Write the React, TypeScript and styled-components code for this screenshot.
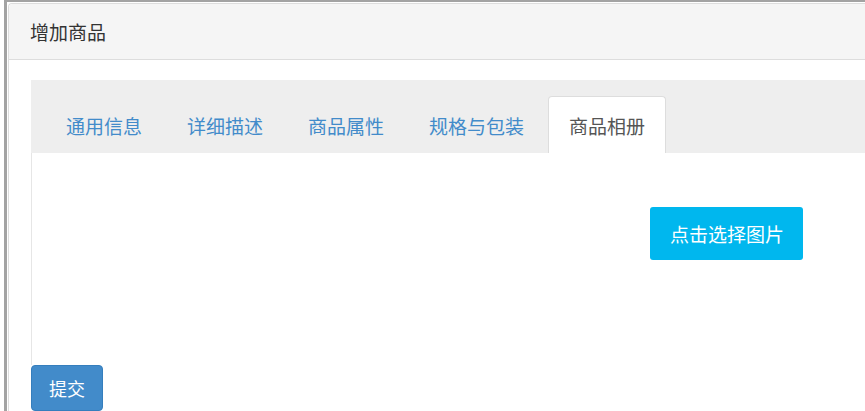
import React, { useState } from "react";
import styled, { createGlobalStyle } from "styled-components";

const Global = createGlobalStyle`
  html, body { margin: 0; padding: 0; background: #fff; }
  body { font-family: "Noto Sans CJK SC", "Noto Sans", sans-serif; overflow: hidden; }
`;

const Frame = styled.div`
  margin-left: 4px;
  border-top: 2px solid #a3a3a3;
  border-left: 3px solid #a3a3a3;
  padding: 1px 0 0 1px;
  min-height: 420px;
`;

const Panel = styled.div`
  border: 1px solid #dddddd;
  border-right: none;
  border-radius: 4px 0 0 4px;
  background: #fff;
  min-height: 420px;
`;

const PanelHeader = styled.div`
  height: 55px;
  background: #f5f5f5;
  border-bottom: 1px solid #dddddd;
  border-radius: 4px 0 0 0;
  display: flex;
  align-items: center;
  padding: 0 21px;
  font-size: 19px;
  color: #333;
`;

const PanelBody = styled.div`
  padding: 20px 0 0 22px;
`;

const TabBar = styled.div`
  display: flex;
  align-items: flex-end;
  background: #eeeeee;
  padding: 16px 0 0 14px;
  height: 57px;
`;

const Tab = styled.div<{ $active?: boolean }>`
  height: 57px;
  box-sizing: border-box;
  padding: 0 20px;
  margin-right: 3px;
  display: flex;
  align-items: center;
  font-size: 19px;
  white-space: nowrap;
  cursor: pointer;
  border: 1px solid ${(p) => (p.$active ? "#dddddd" : "transparent")};
  border-bottom: none;
  border-radius: 4px 4px 0 0;
  background: ${(p) => (p.$active ? "#ffffff" : "transparent")};
  color: ${(p) => (p.$active ? "#555555" : "#428bca")};
`;

const TabContent = styled.div`
  border-left: 1px solid #e6e6e6;
  height: 212px;
  box-sizing: border-box;
  padding: 54px 0 0 618px;
`;

const PickButton = styled.button`
  height: 53px;
  padding: 0 19px 0 20px;
  border: none;
  border-radius: 3px;
  background: #00b7ee;
  color: #fff;
  font-family: inherit;
  font-size: 19px;
  white-space: nowrap;
  cursor: pointer;
`;

const SubmitButton = styled.button`
  height: 46px;
  padding: 0 17px;
  border: 1px solid #357ebd;
  border-radius: 4px;
  background: #428bca;
  color: #fff;
  font-family: inherit;
  font-size: 18px;
  cursor: pointer;
`;

const tabs = ["通用信息", "详细描述", "商品属性", "规格与包装", "商品相册"];

export default function App() {
  const [active, setActive] = useState(4);
  return (
    <>
      <Global />
      <Frame>
        <Panel>
          <PanelHeader>增加商品</PanelHeader>
          <PanelBody>
            <TabBar>
              {tabs.map((t, i) => (
                <Tab key={t} $active={i === active} onClick={() => setActive(i)}>
                  {t}
                </Tab>
              ))}
            </TabBar>
            <TabContent>
              <PickButton>点击选择图片</PickButton>
            </TabContent>
            <SubmitButton>提交</SubmitButton>
          </PanelBody>
        </Panel>
      </Frame>
    </>
  );
}
